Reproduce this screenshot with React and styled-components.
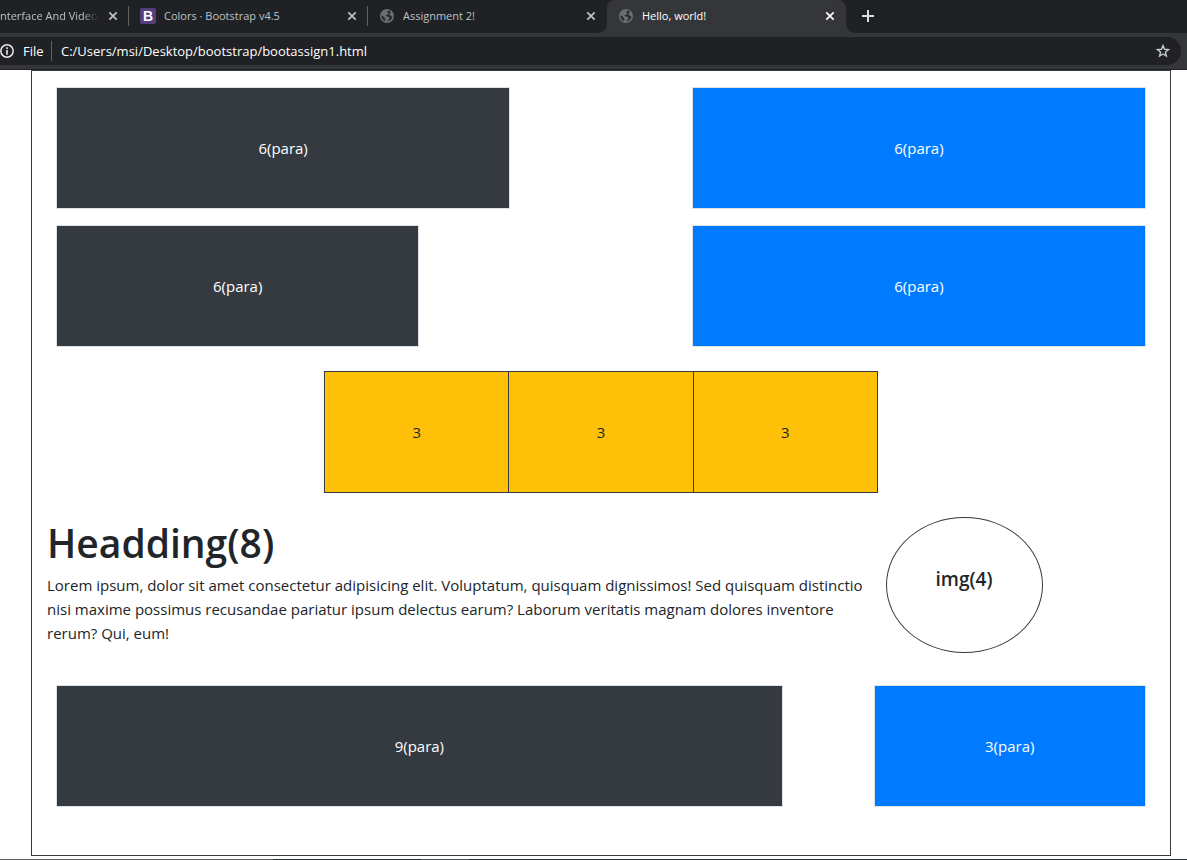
import React from "react";
import styled, { createGlobalStyle } from "styled-components";

const GlobalStyle = createGlobalStyle`
  * { box-sizing: border-box; }
  body {
    margin: 0;
    background: #fff;
    color: #212529;
    font-family: "Segoe UI", "Open Sans", sans-serif;
    font-size: 15px;
    line-height: 24px;
  }
  h1, h2, p { margin: 0; }
  svg { flex: none; }
  button { padding: 0; border: 0; background: none; font: inherit; color: inherit; }
`;

const Page = styled.div`
  display: flex;
  flex-direction: column;
  min-height: 100vh;
`;

const TabStrip = styled.nav`
  display: flex;
  height: 33px;
  overflow: hidden;
  background: #202124;
  font-size: 11px;
  color: #bdc1c6;
`;

const Tab = styled.div`
  position: relative;
  display: flex;
  align-items: center;
  gap: 8px;
  flex: 0 0 ${(p) => (p.$clipped ? 129 : 239)}px;
  min-width: 0;
  height: 33px;
  padding: 0 9px 2px ${(p) => (p.$clipped ? 0 : 11)}px;
  color: ${(p) => (p.$active ? "#fff" : "#bdc1c6")};
  background: ${(p) => (p.$active ? "#35363a" : "transparent")};
  border-radius: 8px 8px 0 0;

  &::before,
  &::after {
    content: "";
    display: ${(p) => (p.$active ? "block" : "none")};
    position: absolute;
    bottom: 0;
    width: 8px;
    height: 8px;
  }
  &::before {
    left: -8px;
    background: radial-gradient(circle at 0 0, transparent 7px, #35363a 8px);
  }
  &::after {
    right: -8px;
    background: radial-gradient(circle at 100% 0, transparent 7px, #35363a 8px);
  }
`;

const TabTitle = styled.span`
  flex: 1;
  min-width: 0;
  overflow: hidden;
  white-space: nowrap;
  mask-image: ${(p) => (p.$fade ? "linear-gradient(to right, #000 85%, transparent)" : "none")};
`;

const Separator = styled.span`
  align-self: center;
  flex: none;
  width: 1px;
  height: 20px;
  margin-left: -1px;
  margin-bottom: ${(p) => (p.$tab ? 1 : 0)}px;
  background: #5f6368;
`;

const IconButton = styled.button`
  display: flex;
  align-items: center;
  justify-content: center;
  flex: none;
  width: 14px;
  height: 20px;
`;

const NewTab = styled(IconButton)`
  width: 18px;
  height: 31px;
  margin-left: 13px;
`;

const Favicon = styled.span`
  display: flex;
  flex: none;
  width: 16px;
`;

const BootstrapMark = styled.span`
  display: flex;
  align-items: center;
  justify-content: center;
  flex: none;
  width: 16px;
  height: 16px;
  border-radius: 2px;
  background: #563d7c;
  color: #fff;
  font: bold 14px/16px "Liberation Sans", sans-serif;
`;

const Toolbar = styled.header`
  height: 37px;
  padding: 4px 6px 4px 0;
  background: #35363a;
  border-bottom: 1px solid #202124;
`;

const AddressBar = styled.div`
  display: flex;
  align-items: center;
  height: 28px;
  padding-right: 11px;
  border-radius: 0 14px 14px 0;
  background: #202124;
  color: #fff;
  font-size: 13px;
`;

const Scheme = styled.label`
  flex: none;
  width: 29px;
  margin-left: 9px;
`;

const Address = styled.input`
  flex: 1;
  min-width: 0;
  margin-left: 9px;
  padding: 0;
  border: 0;
  outline: 0;
  background: none;
  color: #fff;
  font: inherit;
`;

const Frame = styled.main`
  flex: 1;
  margin: 0 16px 3px 31px;
  padding: 16px 0 48px;
  border: 1px solid #343a40;
`;

const Row = styled.section`
  display: flex;
  justify-content: space-between;
  margin: 0 24px ${(p) => p.$gap || 0}px;
`;

const Block = styled.div`
  display: flex;
  align-items: center;
  justify-content: center;
  flex: 0 0 calc(100% * ${(p) => p.$span} / 12);
  height: 122px;
  border: 1px solid #dee2e6;
  background: ${(p) => (p.$primary ? "#007bff" : "#343a40")};
  color: #fff;
`;

const Trio = styled.section`
  display: grid;
  grid-template-columns: repeat(3, 1fr);
  gap: 1px;
  width: calc(50% - 15px);
  margin: 0 auto 24px;
  border: 1px solid #343a40;
  background: #343a40;
`;

const TrioCell = styled.div`
  display: flex;
  align-items: center;
  justify-content: center;
  height: 120px;
  background: #ffc107;
`;

const Article = styled.section`
  display: flex;
  align-items: flex-start;
  margin-bottom: 32px;
`;

const Copy = styled.div`
  flex: 0 0 75%;
  padding: 2px 12px 0 15px;
`;

const Heading = styled.h1`
  margin-bottom: 6px;
  font-size: 39px;
  font-weight: 600;
  line-height: 48px;
`;

const Circle = styled.div`
  width: 157px;
  height: 136px;
  padding-top: 49px;
  border: 1px solid #343a40;
  border-radius: 50%;
  text-align: center;
`;

const CircleLabel = styled.h2`
  font-size: 19px;
  font-weight: 600;
  line-height: 24px;
`;

const Taskbar = styled.footer`
  height: 1px;
  background: linear-gradient(to right, #5e5e5c 273px, #263238 273px 421px, #4b535b 421px 469px, #263238 469px);
`;

function GlobeIcon() {
  return (
    <svg width="16" height="16" viewBox="0 0 16 16" aria-hidden="true">
      <circle cx="8" cy="8" r="7" fill="#6b6f74" />
      <path
        d="M10.5 2.5C8 2.7 8.2 4.4 9.2 5c1 .7-.4 1.6-1.6 1.7-1.4.1-.9 1.7.3 1.7 1.7 0 2.7.7 2.4 2-.3 1.2-1.6 1-1.9 2.9 2.6 0 4.9-2.3 5-5-.9.2-1.7-.1-2-1-.3-.9-1.3-.6-1.1-1.6.2-.8 1.4-.7 1.6-1.7-.4-.5-.9-1-1.4-1.5z"
        fill="#2b2c30"
      />
      <path d="M2.4 7.5c1.4.3 2.8 1 3 2 .2.9 1.2 1 1 2.1l-.4 1.6C3.700 12.300 2.200 10 2.400 7.500z" fill="#2b2c30" />
    </svg>
  );
}

function CloseTab({ title }) {
  return (
    <IconButton type="button" aria-label={`Close ${title}`}>
      <svg width="14" height="14" viewBox="0 0 14 14" aria-hidden="true">
        <path d="M3.300 3.300l7.400 7.400M10.700 3.300l-7.400 7.400" stroke="currentColor" strokeWidth="1.700" />
      </svg>
    </IconButton>
  );
}

export default function App() {
  return (
    <>
      <GlobalStyle />
      <Page>
        <TabStrip>
          <Tab $clipped>
            <TabTitle $fade>nterface And Video</TabTitle>
            <CloseTab title="Interface And Video" />
          </Tab>
          <Separator $tab />
          <Tab>
            <BootstrapMark>B</BootstrapMark>
            <TabTitle>Colors · Bootstrap v4.5</TabTitle>
            <CloseTab title="Colors" />
          </Tab>
          <Separator $tab />
          <Tab>
            <Favicon><GlobeIcon /></Favicon>
            <TabTitle>Assignment 2!</TabTitle>
            <CloseTab title="Assignment 2!" />
          </Tab>
          <Tab $active>
            <Favicon><GlobeIcon /></Favicon>
            <TabTitle>Hello, world!</TabTitle>
            <CloseTab title="Hello, world!" />
          </Tab>
          <NewTab type="button" aria-label="New tab">
            <svg width="18" height="18" viewBox="0 0 18 18" aria-hidden="true">
              <path d="M9 3v12M3 9h12" stroke="#dadce0" strokeWidth="2" />
            </svg>
          </NewTab>
        </TabStrip>
        <Toolbar>
          <AddressBar>
            <IconButton type="button" aria-label="Site information">
              <svg width="14" height="14" viewBox="0 0 14 14" aria-hidden="true">
                <circle cx="7" cy="7" r="6.200" fill="none" stroke="#e8eaed" strokeWidth="1.500" />
                <path d="M7 3.300v1.700M7 6v4.700" stroke="#e8eaed" strokeWidth="1.600" />
              </svg>
            </IconButton>
            <Scheme htmlFor="address">File</Scheme>
            <Separator />
            <Address id="address" defaultValue="C:/Users/msi/Desktop/bootstrap/bootassign1.html" />
            <IconButton type="button" aria-label="Bookmark this page">
              <svg width="14" height="14" viewBox="0 0 14 14" aria-hidden="true">
                <path
                  d="M7 1.600l1.500 3.700 4 .3-3.100 2.600 1 3.900L7 10l-3.400 2.100 1-3.900L1.500 5.600l4-.3z"
                  fill="none"
                  stroke="#c4c7cb"
                  strokeWidth="1.400"
                />
              </svg>
            </IconButton>
          </AddressBar>
        </Toolbar>
        <Frame>
          <Row $gap={16}>
            <Block $span={5}>6(para)</Block>
            <Block $span={5} $primary>6(para)</Block>
          </Row>
          <Row $gap={24}>
            <Block $span={4}>6(para)</Block>
            <Block $span={5} $primary>6(para)</Block>
          </Row>
          <Trio>
            <TrioCell>3</TrioCell>
            <TrioCell>3</TrioCell>
            <TrioCell>3</TrioCell>
          </Trio>
          <Article>
            <Copy>
              <Heading>Headding(8)</Heading>
              <p>
                Lorem ipsum, dolor sit amet consectetur adipisicing elit. Voluptatum, quisquam dignissimos! Sed
                quisquam distinctio nisi maxime possimus recusandae pariatur ipsum delectus earum? Laborum
                veritatis magnam dolores inventore rerum? Qui, eum!
              </p>
            </Copy>
            <Circle>
              <CircleLabel>img(4)</CircleLabel>
            </Circle>
          </Article>
          <Row>
            <Block $span={8}>9(para)</Block>
            <Block $span={3} $primary>3(para)</Block>
          </Row>
        </Frame>
        <Taskbar />
      </Page>
    </>
  );
}
